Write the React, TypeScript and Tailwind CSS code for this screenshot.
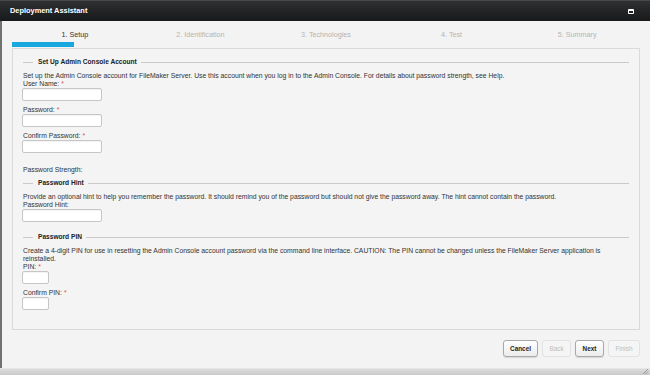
import React from "react";

const Req = () => <span className="text-[#d9534f] ml-[2px]">*</span>;

function Legend({ title }: { title: string }) {
  return (
    <div className="flex items-center h-[10px] pr-[10px]">
      <div className="w-[10px] h-px bg-[#c9c9c9]" />
      <div className="ml-[5px] mr-[4px] font-bold text-[#222] text-[6.6px] leading-[10px] whitespace-nowrap">{title}</div>
      <div className="flex-1 h-px bg-[#c9c9c9]" />
    </div>
  );
}

function Label({ text, req, className = "" }: { text: string; req?: boolean; className?: string }) {
  return (
    <div className={"leading-[8px] h-[8px] whitespace-nowrap " + className}>
      {text}
      {req && <Req />}
    </div>
  );
}

function Input({ w = "w-[80px]" }: { w?: string }) {
  return <div className={w + " h-[13px] -ml-px bg-white border border-[#c6c6c6] rounded-[2px] shadow-[inset_0_1px_1px_rgba(0,0,0,0.05)]"} />;
}

function Btn({ label, disabled, w }: { label: string; disabled?: boolean; w: string }) {
  return (
    <div
      className={
        w +
        " h-[17px] flex items-center justify-center rounded-[3px] text-[6.4px] " +
        (disabled
          ? "border border-[#e2e2e2] bg-[#f5f5f5] text-[#bdbdbd]"
          : "border border-[#a9a9a9] bg-gradient-to-b from-[#ffffff] to-[#ececec] text-[#1e1e1e] font-bold shadow-[0_1px_1px_rgba(0,0,0,0.12)]")
      }
    >
      {label}
    </div>
  );
}

export default function App() {
  const steps = ["1. Setup", "2. Identification", "3. Technologies", "4. Test", "5. Summary"];
  return (
    <div
      className="w-[650px] h-[375px] overflow-hidden flex flex-col bg-[#f3f3f3] text-[#333]"
      style={{ fontFamily: '"Liberation Sans", Arial, sans-serif' }}
    >
      {/* Title bar */}
      <div className="h-[21px] shrink-0 flex items-center justify-between pl-[10px] pr-[16px] bg-gradient-to-b from-[#2e3032] to-[#17191b] border-t border-[#4a4a4a]">
        <span className="text-white font-bold text-[7.4px]">Deployment Assistant</span>
        <div className="w-[6px] h-[5px] border border-white border-t-2 rounded-[1px]" />
      </div>

      {/* Body */}
      <div className="flex-1 flex flex-col border-l-2 border-[#727272] pl-[10px] pr-[10px]">
        {/* Steps */}
        <div className="grid grid-cols-5 pt-[10px] text-[7.2px] leading-[8px]">
          {steps.map((s, i) => (
            <div key={s} className={"text-center " + (i === 0 ? "text-[#333]" : "text-[#b3b3b3]")}>
              {s}
            </div>
          ))}
        </div>
        <div className="mt-[3px] w-[62px] h-[5px] bg-[#19a7df]" />

        {/* Panel */}
        <div className="mt-[1px] h-[282px] border border-[#dadada] bg-[#f4f4f4] pt-[8px] pl-[10px] flex flex-col text-[6.8px]">
          <Legend title="Set Up Admin Console Account" />
          <div className="mt-[5px] leading-[8px] whitespace-nowrap">
            Set up the Admin Console account for FileMaker Server. Use this account when you log in to the Admin Console. For details about password strength, see Help.
          </div>
          <Label text="User Name:" req />
          <Input />
          <Label text="Password:" req className="mt-[5px]" />
          <Input />
          <Label text="Confirm Password:" req className="mt-[5px]" />
          <Input />
          <Label text="Password Strength:" className="mt-[13px]" />

          <div className="mt-[4px]">
            <Legend title="Password Hint" />
          </div>
          <div className="mt-[5px] leading-[8px] whitespace-nowrap">
            Provide an optional hint to help you remember the password. It should remind you of the password but should not give the password away. The hint cannot contain the password.
          </div>
          <Label text="Password Hint:" />
          <Input />

          <div className="mt-[10px]">
            <Legend title="Password PIN" />
          </div>
          <div className="mt-[5px] leading-[8px] pr-[28px]">
            Create a 4-digit PIN for use in resetting the Admin Console account password via the command line interface. CAUTION: The PIN cannot be changed unless the FileMaker Server application is reinstalled.
          </div>
          <Label text="PIN:" req />
          <Input w="w-[27px]" />
          <Label text="Confirm PIN:" req className="mt-[5px]" />
          <Input w="w-[27px]" />
        </div>

        {/* Footer */}
        <div className="flex justify-end gap-[4px] mt-[10px]">
          <Btn label="Cancel" w="w-[35px]" />
          <Btn label="Back" disabled w="w-[29px]" />
          <Btn label="Next" w="w-[29px]" />
          <Btn label="Finish" disabled w="w-[32px]" />
        </div>
      </div>

      {/* Bottom bar */}
      <div className="h-[7px] shrink-0 bg-gradient-to-b from-[#dcdcdc] to-[#c9c9c9] border-t border-[#e6e6e6] flex justify-end items-end">
        <svg width="7" height="7" viewBox="0 0 7 7" className="mr-[1px]">
          <path d="M6 1 L1 6 M6 3.5 L3.5 6" stroke="#8a8a8a" strokeWidth="0.8" />
        </svg>
      </div>
    </div>
  );
}
